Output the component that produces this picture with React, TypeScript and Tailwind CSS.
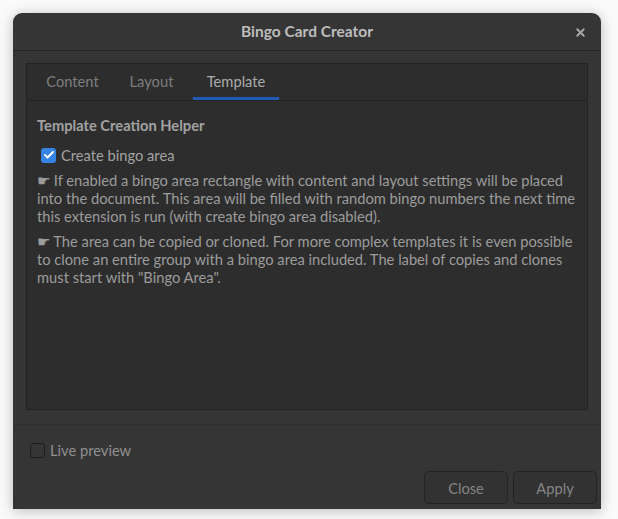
import { Check, X } from 'lucide-react'

const font = { fontFamily: 'Lato, "Noto Sans", sans-serif' }

const tabs = [
  { label: 'Content', w: 'w-[75px]' },
  { label: 'Layout', w: 'w-[67px]' },
  { label: 'Template', w: 'w-[86px]' },
]

const App = () => {
  return (
    <div
      className="w-[618px] h-[519px] bg-[#fafafa] pt-[13px] pl-[13px] overflow-hidden"
      style={font}
    >
      <div className="w-[588px] h-[496px] bg-[#353535] rounded-t-[9px] shadow-[0_2px_14px_rgba(0,0,0,0.25)] flex flex-col">
        {/* titlebar */}
        <div className="h-[38px] flex items-center justify-center relative border-b border-[#262626]">
          <span className="text-[15.5px] font-bold text-[#bdbdbd]">Bingo Card Creator</span>
          <X size={13} strokeWidth={3.5} className="absolute right-[14px] top-[13px] text-[#a8a8a8]" />
        </div>

        {/* notebook */}
        <div className="mx-[13px] mt-[12px] h-[347px] border border-[#232323] bg-[#2d2d2d] flex flex-col">
          <div className="h-[37px] flex gap-[8px] border-b border-[#232323] pl-[8px]">
            {tabs.map((t) =>
              t.label === 'Template' ? (
                <div
                  key={t.label}
                  className={`${t.w} flex items-center justify-center text-[14.7px] text-[#ababab] border-b-[3px] border-[#1c5cb2] pt-[2px]`}
                >
                  {t.label}
                </div>
              ) : (
                <div
                  key={t.label}
                  className={`${t.w} flex items-center justify-center text-[14.7px] text-[#7e7e7e] pb-[1px]`}
                >
                  {t.label}
                </div>
              )
            )}
          </div>
          <div className="px-[10px] pt-[15px] text-[14.7px] text-[#9c9c9c] leading-[18px]">
            <div className="font-bold text-[#a2a2a2]">Template Creation Helper</div>
            <div className="flex items-center gap-[5px] mt-[12px] ml-[4px]">
              <div className="w-[15px] h-[15px] rounded-[3px] bg-[#3584e4] flex items-center justify-center">
                <Check size={12} strokeWidth={4} className="text-white" />
              </div>
              <span className="text-[#a3a3a3]">Create bingo area</span>
            </div>
            <p className="mt-[7px]">
              ☛ If enabled a bingo area rectangle with content and layout settings will be placed
              <br />
              into the document. This area will be filled with random bingo numbers the next time
              <br />
              this extension is run (with create bingo area disabled).
            </p>
            <p className="mt-[7px]">
              ☛ The area can be copied or cloned. For more complex templates it is even possible
              <br />
              to clone an entire group with a bingo area included. The label of copies and clones
              <br />
              must start with "Bingo Area".
            </p>
          </div>
        </div>

        <div className="mt-[14px] border-t border-[#2f2f2f]" />

        <div className="flex items-center gap-[5px] mt-[14px] ml-[17px]">
          <div className="w-[15px] h-[15px] rounded-[3px] border border-[#1c1c1c]" />
          <span className="text-[14.7px] text-[#909090]">Live preview</span>
        </div>

        <div className="flex justify-end gap-[5px] mt-[10px] pr-[4px]">
          <button className="w-[84px] h-[33px] rounded-[5px] border border-[#232323] bg-[#323232] text-[14.7px] text-[#858585]">
            Close
          </button>
          <button className="w-[84px] h-[33px] rounded-[5px] border border-[#232323] bg-[#323232] text-[14.7px] text-[#858585]">
            Apply
          </button>
        </div>
      </div>
    </div>
  )
}

export default App
